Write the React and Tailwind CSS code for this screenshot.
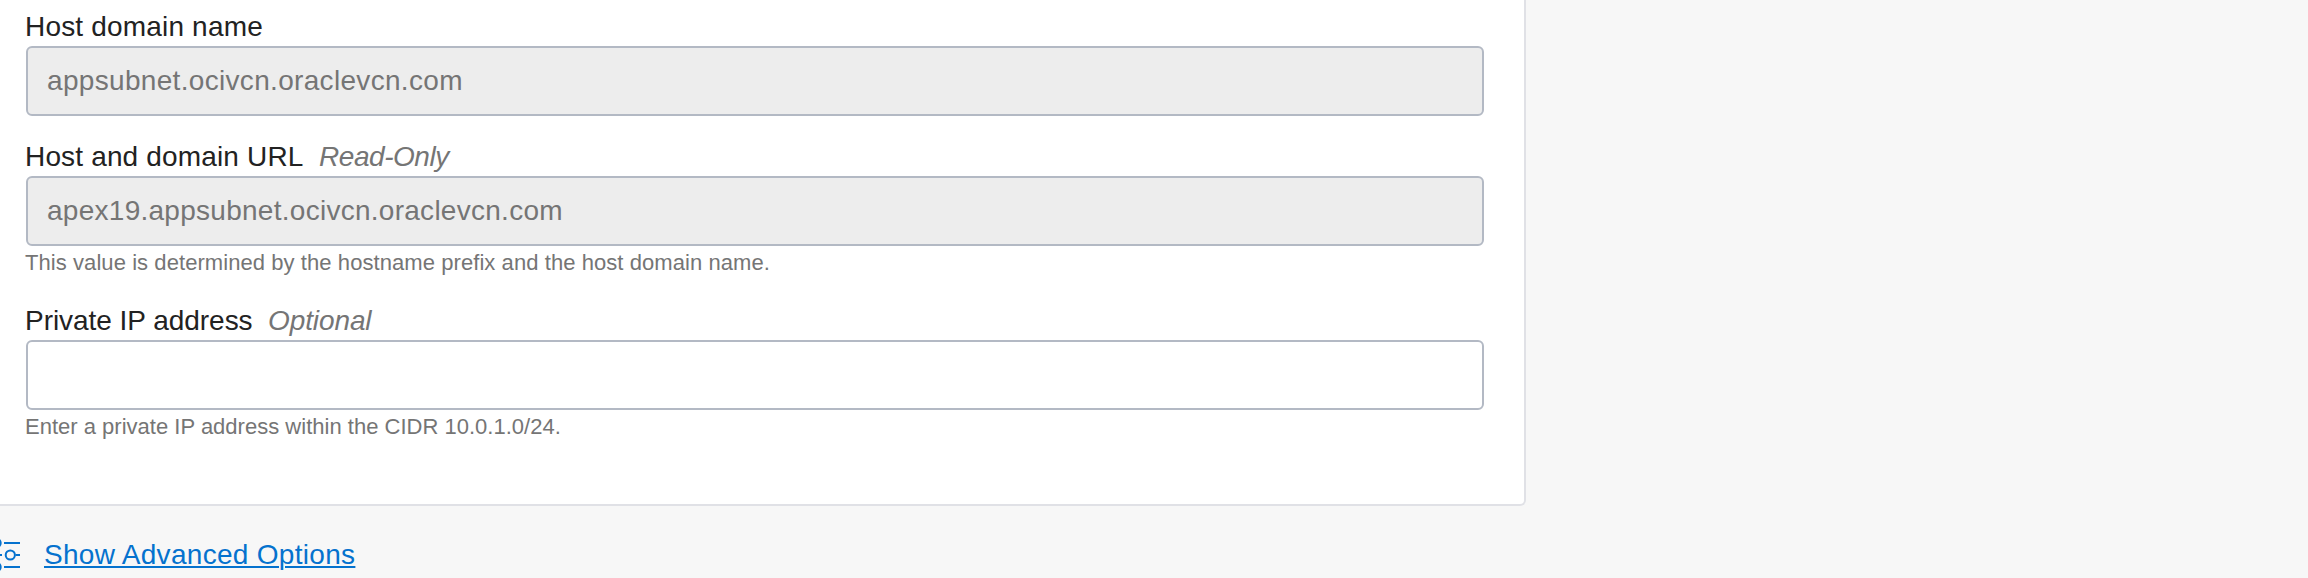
function Label({ text, textClass, note, noteClass }) {
  return (
    <div className="flex h-[34px] items-start pt-px whitespace-pre text-[28px] leading-[34px]">
      <span className={`text-[#222222] ${textClass}`}>{text}</span>
      {note && <em className={`text-[#757575] ${noteClass}`}>{note}</em>}
    </div>
  );
}

const inputClass =
  "mt-[3px] block h-[70px] w-[1458px] rounded-[6px] border-2 border-[#b3b9c4] pl-[19px] text-[28px] leading-[34px] text-[#757575] outline-none";

export default function App() {
  return (
    <div className="flex h-[578px] w-[2308px] flex-col overflow-hidden bg-[#f7f7f7] font-['Liberation_Sans',Arial,sans-serif]">
      <section className="h-[506px] w-[1526px] rounded-br-[6px] border-r-2 border-b-2 border-[#e0e1e6] bg-white pt-[9px] pl-[26px]">
        <Label text="Host domain name" textClass="-ml-px tracking-[0.18px]" />
        <input
          readOnly
          value="appsubnet.ocivcn.oraclevcn.com"
          className={`${inputClass} bg-[#ededed] tracking-[0.32px]`}
        />
        <div className="mt-[23px]">
          <Label
            text="Host and domain URL"
            textClass="-ml-px w-[294px] tracking-[0.16px]"
            note="Read-Only"
            noteClass="tracking-[-0.45px]"
          />
          <input
            readOnly
            value="apex19.appsubnet.ocivcn.oraclevcn.com"
            className={`${inputClass} bg-[#ededed] tracking-[0.27px]`}
          />
          <p className="mt-[3px] -ml-px text-[22px] leading-[28px] tracking-[0.07px] text-[#757575]">
            This value is determined by the hostname prefix and the host domain name.
          </p>
        </div>
        <div className="mt-[26px]">
          <Label
            text="Private IP address"
            textClass="-ml-px w-[243px] tracking-[-0.04px]"
            note="Optional"
            noteClass="tracking-[-0.1px]"
          />
          <input defaultValue="" className={`${inputClass} bg-white`} />
          <p className="mt-[3px] -ml-px text-[22px] leading-[28px] tracking-[0.01px] text-[#757575]">
            Enter a private IP address within the CIDR 10.0.1.0/24.
          </p>
        </div>
      </section>
      <div className="flex pt-[31px]">
        <svg
          width="20"
          height="36"
          viewBox="0 0 20 36"
          fill="none"
          stroke="#0572ce"
          strokeWidth="2"
          className="shrink-0"
        >
          <path d="M4 6H20M0 18H2M15.5 18H20M4 30H20" />
          <circle cx="10.3" cy="18" r="4.6" />
          <circle cx="-3.6" cy="6" r="4.3" />
          <circle cx="-3.6" cy="30" r="4.3" />
        </svg>
        <a
          href="#"
          className="mt-px ml-[24px] text-[28px] leading-[34px] tracking-[0.3px] whitespace-nowrap text-[#0572ce] underline decoration-2 underline-offset-[2px]"
        >
          Show Advanced Options
        </a>
      </div>
    </div>
  );
}
